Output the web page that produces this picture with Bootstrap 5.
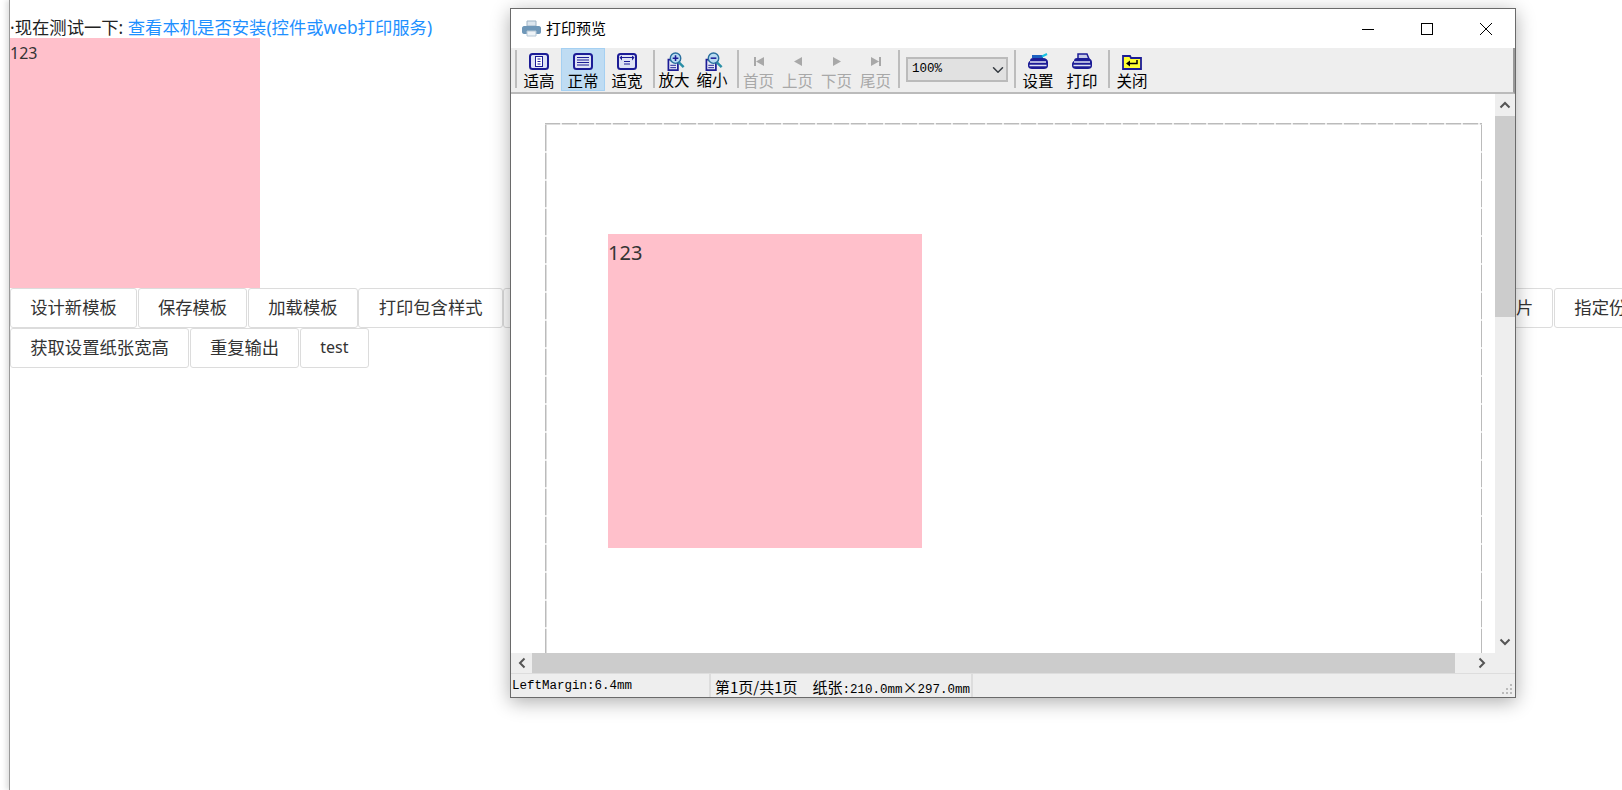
<!doctype html>
<html>
<head>
  <meta charset="utf-8">
  <title>打印预览</title>
  <link href="https://cdn.jsdelivr.net/npm/bootstrap@5.3.0/dist/css/bootstrap.min.css" rel="stylesheet">
  <style>
    body {
      background: #fff;
      color: #222;
      font-family: "Noto Sans", "Noto Sans CJK SC", sans-serif;
      font-size: 17.33px;
      height: 790px;
      overflow: hidden;
    }
    .page-wrap {
      margin-left: 9px;
      height: 790px;
      border-left: 1px solid #999;
      box-shadow: -3px 0 5px rgba(0,0,0,.12);
      padding-top: 16px;
      position: relative;
    }
    .test-line { height: 22px; line-height: 22px; white-space: nowrap; }
    .test-line a { color: #1e90ff; text-decoration: none; }
    .pink-box {
      width: 250px;
      height: 250px;
      background: #ffc0cb;
      font-size: 16px;
      line-height: 30px;
      color: #333;
    }
    .btn-row { overflow: hidden; height: 40px; }
    .tpl-btn {
      flex: none;
      height: 39.5px;
      margin: 0 .7px 0 0;
      padding: 0 19.2px;
      background: #fff;
      border: 1px solid #dcdcdc;
      border-radius: 3px;
      color: #333;
      font-size: 17.33px;
      line-height: 37px;
      white-space: nowrap;
    }
    .tpl-btn.under-window { width: 1050px; text-align: right; }
    .tpl-btn.latin-btn { font-size: 16px; }

    .preview-win {
      position: absolute;
      left: 500px;
      top: 8px;
      width: 1006px;
      height: 690px;
      background: #fff;
      border: 1px solid #6a6a6a;
      box-shadow: 0 4px 18px rgba(0,0,0,.32);
      font-family: "Noto Sans CJK SC", sans-serif;
      color: #000;
    }
    .win-title { height: 39px; padding-left: 11px; font-size: 15px; flex: none; }
    .win-title .title-text { margin-left: 5px; }
    .win-ctrl { width: 59px; height: 39px; }
    .win-toolbar {
      height: 46px;
      flex: none;
      padding-left: 4px;
      background: #eee;
      border-bottom: 2px solid #bbb;
      border-right: 2px solid #999;
    }
    .tool-sep { width: 2px; height: 38px; margin: 2px 0 0 4px; background: #bdbdbd; flex: none; }
    .tool-sep.first { margin-left: 0; }
    .tool-sep.wide { margin-left: 6px; }
    .tool-sep.tight { margin-left: 3px; }
    .tool-item {
      flex: none;
      height: 43px;
      font-size: 15.5px;
      line-height: 18px;
      padding-top: 4px;
      text-align: center;
      border: 1px solid transparent;
    }
    .tool-item svg { display: block; margin: 0 auto 1px; }
    .tool-item svg.tall { margin: -1px 0 -1px 10px; }
    .w44 { width: 44px; }
    .w38 { width: 38px; }
    .w39 { width: 39px; }
    .tool-item.on { background: #bfdcf3; border-color: #a5d0f2; }
    .tool-item.off { color: #a8a8a8; }
    .zoom-pick {
      width: 102px;
      height: 25px;
      margin: 9px 0 0 6px;
      padding: 0 0 0 4px;
      border: 2px solid #bbb;
      border-radius: 0;
      background-color: #e1e1e1;
      background-position: right 0 center;
      font-family: "Liberation Mono", monospace;
      font-size: 12.5px;
      color: #000;
      flex: none;
    }
    .win-body { height: 559px; flex: none; }
    .sheet-view { width: 984px; overflow: hidden; padding: 29px 0 0 34px; }
    .sheet {
      width: 937px;
      height: 700px;
      padding: 111px 0 0 63px;
      background:
        repeating-linear-gradient(90deg, #bbb 0 15px, #eee 15px 17px) top left / 100% 1.5px no-repeat,
        repeating-linear-gradient(0deg, #bbb 0 26px, #eee 26px 28px) top left / 1.5px 100% no-repeat,
        repeating-linear-gradient(0deg, #bbb 0 26px, #eee 26px 28px) top right / 1.5px 100% no-repeat;
    }
    .sheet-box {
      width: 314px;
      height: 314px;
      background: #ffc0cb;
      font-family: "Noto Sans", sans-serif;
      font-size: 20px;
      line-height: 38px;
      color: #333;
    }
    .v-scroll { width: 20px; background: #eee; }
    .v-thumb { height: 201px; background: #ccc; }
    .bar-arrow { height: 22px; }
    .h-scroll { height: 20px; background: #eee; flex: none; }
    .h-thumb { width: 923px; background: #ccc; }
    .h-arrow { width: 21px; flex: none; }
    .h-rest { width: 39px; flex: none; padding-left: 23px; }
    .win-status {
      height: 24px;
      flex: none;
      background: #eee;
      border-top: 1px solid #ddd;
      font-family: "Liberation Mono", "Noto Sans CJK SC", monospace;
      font-size: 12.5px;
      line-height: 25px;
      position: relative;
    }
    .status-cjk { font-family: "Noto Sans CJK SC", sans-serif; font-size: 15px; }
    .status-left { width: 200px; padding-left: 1px; border-right: 2px solid #ddd; }
    .status-right { width: 262px; padding-left: 4px; border-right: 2px solid #ddd; white-space: nowrap; }
    .status-paper { margin-left: 15px; }
    .grip { position: absolute; right: 2px; bottom: 2px; }
  </style>
</head>
<body>
  <svg width="0" height="0" class="position-absolute">
    <defs>
      <symbol id="i-doc" viewBox="0 0 20 17">
        <rect x="1" y="1" width="18" height="15" rx="2.500" fill="#dfe3f5" stroke="#1c1c96" stroke-width="2"/>
      </symbol>
      <symbol id="i-zoom" viewBox="0 0 20 20">
        <path d="M2 8h10v11H2z" fill="#e6e8f6" stroke="#1c1c96" stroke-width="1.800"/>
        <path d="M4 14h6M4 16.500h6" stroke="#1c1c96"/>
        <path d="M13 11l5 5" stroke="#2a8fa6" stroke-width="2.600"/>
        <circle cx="9.500" cy="6.500" r="5.500" fill="#b9dcf2" stroke="#2a6f9e" stroke-width="1.500"/>
      </symbol>
      <symbol id="i-printer" viewBox="0 0 22 17">
        <path d="M3 8c0-2 1-3 3-3h10c3 0 5 2 5 4v4c0 2-2 3-4 3H5c-2 0-4-1-4-3v-2c0-1 1-3 2-3z" fill="#1c1c96"/>
        <path d="M3 9h16M2.500 12.500h17" stroke="#dfe3f5" stroke-width="1.500"/>
      </symbol>
    </defs>
  </svg>

  <div class="page-wrap">
    <div class="test-line">·现在测试一下: <a href="#">查看本机是否安装(控件或web打印服务)</a></div>
    <div class="pink-box">123</div>
    <div class="btn-row d-flex">
      <button class="tpl-btn">设计新模板</button>
      <button class="tpl-btn">保存模板</button>
      <button class="tpl-btn">加载模板</button>
      <button class="tpl-btn">打印包含样式</button>
      <button class="tpl-btn under-window">打印图片</button>
      <button class="tpl-btn">指定份数</button>
    </div>
    <div class="btn-row d-flex">
      <button class="tpl-btn">获取设置纸张宽高</button>
      <button class="tpl-btn">重复输出</button>
      <button class="tpl-btn latin-btn">test</button>
    </div>

    <div class="preview-win d-flex flex-column">
      <div class="win-title d-flex align-items-center">
        <svg width="19" height="17" viewBox="0 0 19 17">
          <path d="M5 1h9v5H5z" fill="#dde6ee" stroke="#9fb4c6"/>
          <path d="M2 6h15c1 0 2 1 2 2v4c0 1-1 2-2 2H2c-1 0-2-1-2-2V8c0-1 1-2 2-2z" fill="#6f97b8"/>
          <path d="M5 11h9v5H5z" fill="#eef3f7" stroke="#b5c6d4"/>
        </svg>
        <span class="title-text">打印预览</span>
        <div class="ms-auto d-flex">
          <div class="win-ctrl d-flex align-items-center justify-content-center">
            <svg width="12" height="12"><path d="M0 6.500h12" stroke="#000"/></svg>
          </div>
          <div class="win-ctrl d-flex align-items-center justify-content-center">
            <svg width="12" height="12"><rect x=".5" y=".5" width="11" height="11" fill="none" stroke="#000"/></svg>
          </div>
          <div class="win-ctrl d-flex align-items-center justify-content-center">
            <svg width="12" height="12"><path d="M0 0l12 12M12 0L0 12" stroke="#000"/></svg>
          </div>
        </div>
      </div>

      <div class="win-toolbar d-flex">
        <div class="tool-sep first"></div>
        <div class="tool-item w44">
          <svg width="20" height="17" viewBox="0 0 20 17"><use href="#i-doc"/><rect x="6.500" y="3.500" width="7" height="10" fill="#fff" stroke="#1c1c96"/><path d="M8.500 6h3M8.500 8.500h3M8.500 11h3" stroke="#1c1c96"/></svg>
          适高
        </div>
        <div class="tool-item w44 on">
          <svg width="20" height="17" viewBox="0 0 20 17"><use href="#i-doc"/><path d="M4 4.500h12M4 7h12M4 9.500h12M4 12h12" stroke="#1c1c96"/></svg>
          正常
        </div>
        <div class="tool-item w44">
          <svg width="20" height="17" viewBox="0 0 20 17"><use href="#i-doc"/><path d="M2.500 4.500l2.500-2v5zM17.500 4.500l-2.500-2v5z" fill="#1c1c96"/><path d="M5 4.500h10M7 8.500h6M7 11h6" stroke="#1c1c96"/></svg>
          适宽
        </div>
        <div class="tool-sep"></div>
        <div class="tool-item w38">
          <svg class="tall" width="20" height="19" viewBox="0 0 20 20"><use href="#i-zoom"/><path d="M6.500 6.500h6M9.500 3.500v6" stroke="#1c1c96" stroke-width="1.600"/></svg>
          放大
        </div>
        <div class="tool-item w38">
          <svg class="tall" width="20" height="19" viewBox="0 0 20 20"><use href="#i-zoom"/><path d="M6.500 6.500h6" stroke="#1c1c96" stroke-width="1.600"/></svg>
          缩小
        </div>
        <div class="tool-sep wide"></div>
        <div class="tool-item w39 off">
          <svg width="14" height="17" viewBox="0 0 14 17"><path d="M2 4h2v9H2zM12 4v9L4 8.500z" fill="#a8a8a8"/></svg>
          首页
        </div>
        <div class="tool-item w39 off">
          <svg width="14" height="17" viewBox="0 0 14 17"><path d="M11 4v9L3 8.500z" fill="#a8a8a8"/></svg>
          上页
        </div>
        <div class="tool-item w39 off">
          <svg width="14" height="17" viewBox="0 0 14 17"><path d="M3 4v9l8-4.500z" fill="#a8a8a8"/></svg>
          下页
        </div>
        <div class="tool-item w39 off">
          <svg width="14" height="17" viewBox="0 0 14 17"><path d="M10 4h2v9h-2zM2 4v9l8-4.500z" fill="#a8a8a8"/></svg>
          尾页
        </div>
        <div class="tool-sep tight"></div>
        <select class="form-select zoom-pick"><option>100%</option></select>
        <div class="tool-sep wide"></div>
        <div class="tool-item w44">
          <svg width="22" height="17" viewBox="0 0 22 17"><use href="#i-printer"/><path d="M5 3.500h11" stroke="#1c5fc0" stroke-width="3"/><path d="M15 3.500l5-2.500" stroke="#17c0e0" stroke-width="2"/></svg>
          设置
        </div>
        <div class="tool-item w44">
          <svg width="22" height="17" viewBox="0 0 22 17"><path d="M7 1h9l2 5H7z" fill="#c8cce8" stroke="#1c1c96" stroke-width="1.500"/><use href="#i-printer"/></svg>
          打印
        </div>
        <div class="tool-sep"></div>
        <div class="tool-item w44">
          <svg width="20" height="17" viewBox="0 0 20 17"><path d="M1 3h7l1 2h10v11H1z" fill="#ffff33" stroke="#1c1c96" stroke-width="1.800"/><path d="M7 10.500h8V7" fill="none" stroke="#000" stroke-width="1.500"/><path d="M4 10.500l4-3v6z" fill="#000"/></svg>
          关闭
        </div>
      </div>

      <div class="win-body d-flex">
        <div class="sheet-view">
          <div class="sheet">
            <div class="sheet-box">123</div>
          </div>
        </div>
        <div class="v-scroll d-flex flex-column">
          <div class="bar-arrow d-flex align-items-center justify-content-center">
            <svg width="12" height="8"><path d="M1.500 6.500L6 2l4.500 4.500" fill="none" stroke="#555" stroke-width="2"/></svg>
          </div>
          <div class="v-thumb"></div>
          <div class="bar-arrow mt-auto d-flex align-items-center justify-content-center">
            <svg width="12" height="8"><path d="M1.500 1.500L6 6l4.500-4.500" fill="none" stroke="#555" stroke-width="2"/></svg>
          </div>
        </div>
      </div>

      <div class="h-scroll d-flex">
        <div class="h-arrow d-flex align-items-center justify-content-center">
          <svg width="8" height="12"><path d="M6.500 1.500L2 6l4.500 4.500" fill="none" stroke="#555" stroke-width="2"/></svg>
        </div>
        <div class="h-thumb"></div>
        <div class="h-rest d-flex align-items-center">
          <svg width="8" height="12"><path d="M1.500 1.500L6 6l-4.500 4.500" fill="none" stroke="#555" stroke-width="2"/></svg>
        </div>
      </div>

      <div class="win-status d-flex">
        <div class="status-left">LeftMargin:6.4mm</div>
        <div class="status-right"><span class="status-cjk">第1页/共1页</span><span class="status-cjk status-paper">纸张</span>:210.0mm<span class="status-cjk">×</span>297.0mm</div>
        <svg class="grip" width="12" height="12" viewBox="0 0 12 12" fill="#bbb">
          <rect x="9" y="1" width="2" height="2"/><rect x="5" y="5" width="2" height="2"/><rect x="9" y="5" width="2" height="2"/>
          <rect x="1" y="9" width="2" height="2"/><rect x="5" y="9" width="2" height="2"/><rect x="9" y="9" width="2" height="2"/>
        </svg>
      </div>
    </div>
  </div>
  <script src="https://cdn.jsdelivr.net/npm/bootstrap@5.3.0/dist/js/bootstrap.bundle.min.js"></script>
</body>
</html>
